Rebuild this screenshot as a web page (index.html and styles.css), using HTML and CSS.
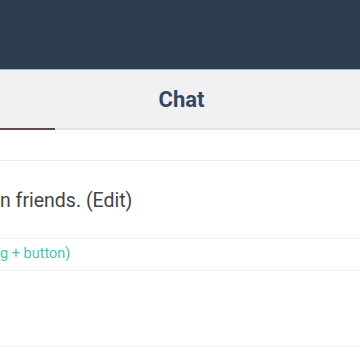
FILE: index.html
```html
<!DOCTYPE html>
<html>
<head>
<meta charset="utf-8">
<link rel="stylesheet" href="styles.css">
</head>
<body>
<div class="page">
  <header class="topbar"></header>
  <nav class="tabs">
    <div class="tab-indicator"></div>
    <div class="tab-title">Chat</div>
  </nav>
  <div class="gap"></div>
  <section class="row row-main">
    <p class="main-text">n friends. (Edit)</p>
  </section>
  <section class="row row-hint">
    <p class="hint-text">g + button)</p>
  </section>
  <section class="row row-empty"></section>
</div>
</body>
</html>
```
FILE: styles.css
```css
* { box-sizing: border-box; margin: 0; padding: 0; }
html, body { background: #ffffff; }
body { font-family: Roboto, "Noto Sans", sans-serif; width: 360px; height: 360px; overflow: hidden; }
.page { display: flex; flex-direction: column; }
.topbar { height: 70px; background: #2d3e50; border-bottom: 1px solid #aab2bd; }
.tabs { position: relative; height: 60px; background: #f1f1f4; border-bottom: 2px solid #e6e6ea; display: flex; align-items: center; justify-content: center; }
.tab-title { font-weight: 700; font-size: 22px; color: #34495e; padding-left: 3px; }
.tab-indicator { position: absolute; left: 0; bottom: -2px; width: 55px; height: 2px; background: #5e4b4f; }
.gap { height: 31px; border-bottom: 1px solid #ececec; }
.row { border-bottom: 1px solid #efefef; display: flex; align-items: center; }
.row-main { height: 78px; }
.main-text { font-size: 19.5px; color: #444444; padding-top: 2px; }
.row-hint { height: 32px; }
.hint-text { font-size: 14.5px; color: #4fc1b4; padding-bottom: 2px; }
.row-empty { height: 76px; }
```
